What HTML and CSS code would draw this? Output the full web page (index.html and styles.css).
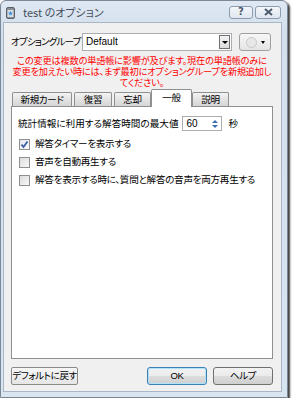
FILE: index.html
```html
<!DOCTYPE html>
<html lang="ja">
<head>
    <meta charset="UTF-8">
    <title>test のオプション</title>
    <link rel="stylesheet" href="styles.css">
</head>
<body>
    <div class="window">
        <div class="titlebar">
            <svg class="app-icon" width="9" height="12" viewBox="0 0 9 12">
                <rect x="0.5" y="0.5" width="8" height="11" rx="1.5" fill="#8a8f96" stroke="#5c6168"/>
                <rect x="1.5" y="3" width="6" height="7" fill="#d8dde3"/>
                <path d="M4.5 3.8 L5.2 5.6 L7 5.7 L5.6 6.8 L6.1 8.6 L4.5 7.6 L2.9 8.6 L3.4 6.8 L2 5.7 L3.8 5.6 Z" fill="#3b8fe0"/>
            </svg>
            <span class="title">test のオプション</span>
            <div class="caption-buttons">
                <div class="cap-btn help">?</div>
                <div class="cap-btn close">
                    <svg width="9" height="8" viewBox="0 0 9 8"><path d="M1 1 L8 7 M8 1 L1 7" stroke="#4c5a6c" stroke-width="2"/></svg>
                </div>
            </div>
        </div>

        <div class="client">
            <div class="group-row">
                <span class="label">オプショングループ</span>
                <div class="combo">
                    <span class="combo-text">Default</span>
                    <span class="combo-arrow"><span class="tri"></span></span>
                </div>
                <div class="gear-btn">
                    <span class="gear"></span>
                    <span class="tri small"></span>
                </div>
            </div>

            <p class="warning">この変更は複数の単語帳に影響が及びます。現在の単語帳のみに<br>変更を加えたい時には、まず最初にオプショングループを新規追加し<br>てください。</p>

            <div class="tabs">
                <div class="tab t1">新規カード</div>
                <div class="tab t2">復習</div>
                <div class="tab t3">忘却</div>
                <div class="tab active">一般</div>
                <div class="tab t5">説明</div>
            </div>
            <div class="panel">
                <div class="row">
                    <span>統計情報に利用する解答時間の最大値</span>
                    <div class="spin">
                        <span class="spin-value">60</span>
                        <span class="spin-arrows">
                            <span class="up"></span>
                            <span class="down"></span>
                        </span>
                    </div>
                    <span>秒</span>
                </div>
                <label class="check first"><span class="box checked">
                    <svg width="9" height="9" viewBox="0 0 9 9"><path d="M1.5 4.5 L3.5 7 L7.5 1.5" fill="none" stroke="#3a5ea8" stroke-width="1.8"/></svg>
                </span>解答タイマーを表示する</label>
                <label class="check"><span class="box"></span>音声を自動再生する</label>
                <label class="check"><span class="box"></span>解答を表示する時に、質問と解答の音声を両方再生する</label>
            </div>

            <div class="buttons">
                <div class="btn reset">デフォルトに戻す</div>
                <div class="spacer"></div>
                <div class="btn ok">OK</div>
                <div class="btn">ヘルプ</div>
            </div>
        </div>
    </div>
</body>
</html>
```

FILE: styles.css
```css
body {
    margin: 0;
    background: #fff;
    font-family: "Noto Sans CJK JP", "Noto Sans", sans-serif;
    font-size: 9.6px;
    line-height: 1.2;
    font-feature-settings: "palt";
    white-space: nowrap;
    color: #000;
}
.window {
    width: 288px;
    height: 398px;
    box-sizing: border-box;
    border: 1px solid #7a8797;
    border-radius: 6px 6px 0 0;
    background: linear-gradient(#dfe8f3, #d3dfec 30px, #d9e4f1);
    box-shadow: 2px 2px 2px rgba(0, 0, 0, 0.75);
    display: flex;
    flex-direction: column;
    padding: 0 5px 5px 2px;
}
.titlebar {
    height: 21px;
    flex: none;
    display: flex;
    align-items: center;
    padding-left: 3px;
}
.app-icon {
    margin-top: 2px;
}
.title {
    margin-left: 8px;
    margin-top: 2px;
    font-size: 11px;
    color: #46505c;
}
.caption-buttons {
    margin-left: auto;
    display: flex;
    gap: 2px;
    margin-top: 1px;
    margin-right: 1px;
}
.cap-btn {
    height: 11px;
    border: 1px solid #8c9bb0;
    border-radius: 3px;
    background: linear-gradient(#f4f7fb, #dfe6ef);
    display: flex;
    align-items: center;
    justify-content: center;
    font-family: "DejaVu Sans", sans-serif;
    font-weight: bold;
    font-size: 10px;
    color: #4c5a6c;
}
.cap-btn.help {
    width: 22px;
}
.cap-btn.close {
    width: 24px;
}
.client {
    flex: 1;
    background: #f0f0f0;
    border: 1px solid #a9b6c6;
    padding: 10px 8px 0 7px;
    display: flex;
    flex-direction: column;
}
.group-row {
    display: flex;
    align-items: center;
    height: 18px;
    flex: none;
}
.label {
    width: 71px;
    letter-spacing: -0.9px;
}
.combo {
    width: 148px;
    height: 16px;
    border: 1px solid #abadb3;
    background: #fff;
    display: flex;
    align-items: center;
}
.combo-text {
    flex: 1;
    padding-left: 3px;
    font-family: "Liberation Sans", sans-serif;
    font-size: 10px;
}
.combo-arrow {
    width: 9px;
    height: 12px;
    margin-right: 1px;
    border: 1px solid #707070;
    background: linear-gradient(#f3f3f3, #dcdcdc);
    display: flex;
    align-items: center;
    justify-content: center;
}
.tri {
    width: 0;
    height: 0;
    border-left: 3px solid transparent;
    border-right: 3px solid transparent;
    border-top: 3px solid #000;
}
.tri.small {
    border-left-width: 2px;
    border-right-width: 2px;
}
.gear-btn {
    margin-left: 7px;
    width: 30px;
    height: 16px;
    border: 1px solid #a0a0a0;
    border-radius: 3px;
    background: linear-gradient(#f7f7f7, #e4e4e4);
    display: flex;
    align-items: center;
    justify-content: center;
    gap: 4px;
}
.gear {
    width: 9px;
    height: 9px;
    border-radius: 50%;
    border: 1px solid #c8c8c8;
    background: #e8e8e8;
}
.warning {
    margin: 4px 0 0;
    height: 33px;
    flex: none;
    color: #ff0000;
    text-align: center;
    line-height: 11px;
    font-size: 9.2px;
    letter-spacing: -0.2px;
}
.tabs {
    flex: none;
    display: flex;
    align-items: flex-end;
    padding-left: 1px;
    gap: 2px;
    height: 18px;
    position: relative;
    z-index: 1;
}
.tab {
    box-sizing: border-box;
    height: 14px;
    border: 1px solid #8e8f8f;
    border-bottom: none;
    border-radius: 2px 2px 0 0;
    background: linear-gradient(#f3f3f3, #e3e3e3 50%, #d6d6d6);
    display: flex;
    align-items: center;
    justify-content: center;
    line-height: 1;
    letter-spacing: -0.4px;
}
.t1 {
    width: 60px;
}
.t2 {
    width: 38px;
}
.t3 {
    width: 37px;
}
.t5 {
    width: 37px;
}
.tab.active {
    height: 18px;
    width: 41px;
    margin: 0 -2px -1px;
    background: #fff;
    padding-bottom: 1px;
}
.panel {
    box-sizing: border-box;
    flex: none;
    height: 253px;
    border: 1px solid #8e8f8f;
    background: #fff;
    padding: 9px 6px 0;
}
.row {
    display: flex;
    align-items: center;
    height: 15px;
}
.spin {
    margin-left: 4px;
    width: 38px;
    height: 13px;
    border: 1px solid #abadb3;
    display: flex;
    align-items: center;
    margin-right: 6px;
}
.spin-value {
    flex: 1;
    padding-left: 3px;
    font-family: "Liberation Sans", sans-serif;
    font-size: 10px;
}
.spin-arrows {
    width: 11px;
    display: flex;
    flex-direction: column;
    align-items: center;
    gap: 2px;
    margin-right: 1px;
}
.up {
    border-left: 3px solid transparent;
    border-right: 3px solid transparent;
    border-bottom: 3px solid #3c6fb0;
}
.down {
    border-left: 3px solid transparent;
    border-right: 3px solid transparent;
    border-top: 3px solid #3c6fb0;
}
.check {
    display: flex;
    align-items: center;
    height: 18px;
    letter-spacing: -0.3px;
}
.check.first {
    margin-top: 4px;
}
.box {
    width: 9px;
    height: 9px;
    border: 1px solid #8f8f8f;
    background: linear-gradient(135deg, #dcdcdc, #f8f8f8);
    margin: 0 5px 0 1px;
    display: flex;
    align-items: center;
    justify-content: center;
}
.box.checked {
    background: linear-gradient(135deg, #e4e8ee, #fafbfc);
}
.buttons {
    flex: none;
    display: flex;
    margin-top: 8px;
    gap: 6px;
}
.spacer {
    flex: 1;
}
.btn {
    box-sizing: border-box;
    width: 60px;
    height: 18px;
    border: 1px solid #707070;
    border-radius: 3px;
    background: linear-gradient(#f2f2f2, #ebebeb 50%, #dddddd 50%, #cfcfcf);
    display: flex;
    align-items: center;
    justify-content: center;
    font-size: 9.5px;
    letter-spacing: -0.4px;
}
.btn.reset {
    width: 67px;
    border-radius: 2px;
    border-color: #8a8a8a;
    background: linear-gradient(#f6f6f6, #e6e6e6);
}
.btn.ok {
    border-color: #3c7fb1;
    box-shadow: inset 0 0 0 1px #aee3fa;
    font-family: "Liberation Sans", sans-serif;
}
```
